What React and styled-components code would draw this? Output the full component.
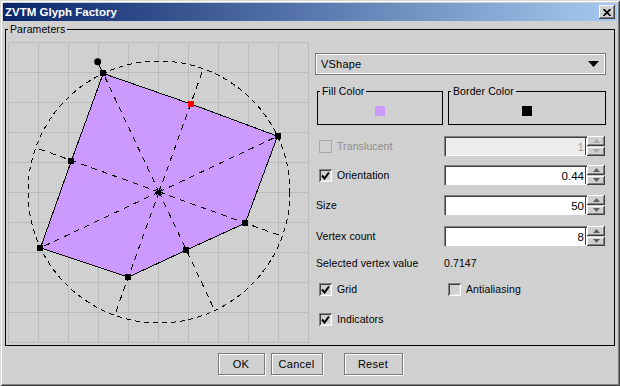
import styled, { createGlobalStyle } from 'styled-components';

const GlobalStyle = createGlobalStyle`
  html, body {
    margin: 0;
    padding: 0;
    background: #d0d0d0;
  }
  body {
    font-family: "Liberation Sans", Arial, sans-serif;
    font-size: 10.5px;
    color: #000;
  }
`;

const Window = styled.div`
  width: 620px;
  height: 386px;
  box-sizing: border-box;
  padding: 3px;
  display: flex;
  flex-direction: column;
  background: #d0d0d0;
  box-shadow: inset 1px 1px 0 #d8d8d8, inset -1px -1px 0 #404040,
    inset 2px 2px 0 #fff, inset -2px -2px 0 #808080;
`;

const TitleBar = styled.div`
  height: 18px;
  display: flex;
  align-items: center;
  justify-content: space-between;
  padding: 0 2px 0 2px;
  background: linear-gradient(to right, #0a246a, #a6caf0);
  color: #fff;
  font-weight: bold;
  font-size: 11.5px;
`;

const CloseButton = styled.div`
  width: 16px;
  height: 14px;
  display: flex;
  align-items: center;
  justify-content: center;
  background: #d0d0d0;
  box-shadow: inset -1px -1px 0 #404040, inset 1px 1px 0 #fff,
    inset -2px -2px 0 #808080;
`;

const Body = styled.div`
  flex: 1;
  display: flex;
  flex-direction: column;
  padding: 0 2px;
`;

const Group = styled.fieldset`
  margin: 2px 0 0;
  padding: 6px 8px 2px 2px;
  border: 1px solid #000;
  display: flex;
  gap: 6px;
  min-width: 0;
`;

const Legend = styled.legend`
  padding: 0 2px;
  margin: 0;
  font-size: 10.5px;
  line-height: 13px;
  letter-spacing: 0.1px;
`;

const Panel = styled.div`
  flex: 1;
  display: flex;
  flex-direction: column;
`;

const Combo = styled.div`
  margin-top: 11px;
  height: 22px;
  box-sizing: border-box;
  display: flex;
  align-items: center;
  justify-content: space-between;
  padding: 0 6px 0 5px;
  border: 1px solid #7a7a7a;
  box-shadow: inset 1px 1px 0 #fff, inset -1px -1px 0 #fff;
  font-size: 11px;
  letter-spacing: 0.2px;
`;

const ColorRow = styled.div`
  display: flex;
  gap: 5px;
  margin: 10px 0 0 2px;
`;

const ColorBox = styled.fieldset`
  width: ${(p) => p.$w}px;
  height: 40px;
  box-sizing: border-box;
  margin: 0;
  padding: 0 2px;
  border: 1px solid #000;
  display: flex;
  align-items: center;
  justify-content: center;
  min-width: 0;
`;

const Swatch = styled.div`
  width: 10px;
  height: 10px;
  margin-top: -1px;
  background: ${(p) => p.$color};
`;

const Row = styled.div`
  display: flex;
  align-items: center;
  height: 20px;
  margin-top: ${(p) => p.$mt}px;
`;

const LabelCell = styled.div`
  width: 129px;
  display: flex;
  align-items: center;
  padding-left: ${(p) => (p.$check ? 4 : 1)}px;
  box-sizing: border-box;
  letter-spacing: 0.1px;
  color: ${(p) => (p.$disabled ? '#8e8e8e' : '#000')};
`;

const Box = styled.span`
  width: 13px;
  height: 13px;
  box-sizing: border-box;
  margin-right: 5px;
  display: inline-flex;
  align-items: center;
  justify-content: center;
  flex: none;
  background: #d0d0d0;
  box-shadow: ${(p) =>
    p.$disabled
      ? 'inset 0 0 0 1px #a8a8a8'
      : 'inset 1px 1px 0 #808080, inset -1px -1px 0 #fff, inset 2px 2px 0 #404040, inset -2px -2px 0 #e4e4e4'};
`;

const Spinner = styled.div`
  display: flex;
  width: 161px;
  height: 20px;
`;

const Field = styled.div`
  flex: 1;
  box-sizing: border-box;
  display: flex;
  align-items: center;
  justify-content: flex-end;
  padding: 2px 3px 0 0;
  font-size: 11.5px;
  background: ${(p) => (p.$disabled ? '#ececec' : '#fff')};
  color: ${(p) => (p.$disabled ? '#9a9a9a' : '#000')};
  box-shadow: inset 1px 1px 0 #808080, inset 2px 2px 0 #404040,
    inset -1px -1px 0 #fff, inset -2px 0 0 #404040;
`;

const Steps = styled.div`
  width: 18px;
  display: flex;
  flex-direction: column;
  gap: 1px;
`;

const Step = styled.div`
  flex: 1;
  display: flex;
  align-items: center;
  justify-content: center;
  background: #d0d0d0;
  box-shadow: inset -1px -1px 0 #404040, inset 1px 1px 0 #fff,
    inset -2px -2px 0 #808080;
`;

const Value = styled.span`
  letter-spacing: 0.1px;
`;

const ButtonBar = styled.div`
  flex: 1;
  display: flex;
  align-items: center;
  justify-content: center;
  gap: 6px;
  padding-bottom: 1px;
`;

const Button = styled.div`
  width: ${(p) => p.$w}px;
  height: 22px;
  margin-left: ${(p) => p.$ml || 0}px;
  display: flex;
  align-items: center;
  justify-content: center;
  border: 1px solid #7a7a7a;
  box-sizing: border-box;
  box-shadow: inset 1px 1px 0 #fff, 1px 1px 0 #fff;
  font-size: 11px;
  letter-spacing: 0.3px;
`;

const Canvas = styled.svg`
  display: block;
  flex: none;
`;

const CX = 151;
const CY = 150;
const R = 131;
const ORIENT = 0.44;
const VALUES = [1, 0.7147, 1, 0.7, 0.49, 0.69, 1, 0.71];

const points = VALUES.map((v, k) => {
  const a = Math.PI / 2 + ORIENT - (k * Math.PI) / 4;
  return {
    x: CX + R * v * Math.cos(a),
    y: CY - R * v * Math.sin(a),
    ox: CX + R * Math.cos(a),
    oy: CY - R * Math.sin(a),
  };
});

const dotA = Math.PI / 2 + ORIENT;
const dot = { x: CX + 144 * Math.cos(dotA), y: CY - 144 * Math.sin(dotA) };

function Glyph() {
  const grid = [];
  for (let i = 0; i <= 10; i++) {
    const p = i * 30 + 0.5;
    grid.push(<line key={'v' + i} x1={p} y1={0} x2={p} y2={301} />);
    grid.push(<line key={'h' + i} x1={0} y1={p} x2={301} y2={p} />);
  }
  const poly = points.map((p) => `${p.x},${p.y}`).join(' ');
  return (
    <Canvas width="301" height="301" viewBox="0 0 301 301" shapeRendering="crispEdges">
      <g stroke="#bcbcbc" strokeWidth="1">{grid}</g>
      <polygon points={poly} fill="#cc99ff" />
      <g stroke="#000" strokeWidth="1" strokeDasharray="6 5">
        {points.map((p, i) => (
          <line key={i} x1={CX} y1={CY} x2={p.ox} y2={p.oy} />
        ))}
      </g>
      <circle cx={CX} cy={CY} r={R} fill="none" stroke="#000" strokeDasharray="5 4" />
      <polygon points={poly} fill="none" stroke="#000" strokeWidth="1" />
      <line x1={points[0].x} y1={points[0].y} x2={dot.x} y2={dot.y} stroke="#000" />
      <circle cx={dot.x} cy={dot.y} r="3.5" fill="#000" shapeRendering="auto" />
      <g stroke="#000" strokeWidth="1">
        <line x1={CX - 4} y1={CY} x2={CX + 4} y2={CY} />
        <line x1={CX} y1={CY - 4} x2={CX} y2={CY + 4} />
        <line x1={CX - 3} y1={CY - 3} x2={CX + 3} y2={CY + 3} />
        <line x1={CX - 3} y1={CY + 3} x2={CX + 3} y2={CY - 3} />
      </g>
      {points.map((p, i) => (
        <rect
          key={i}
          x={Math.round(p.x) - 3}
          y={Math.round(p.y) - 3}
          width="6"
          height="6"
          fill={i === 1 ? '#ff0000' : '#000'}
        />
      ))}
    </Canvas>
  );
}

const Check = () => (
  <svg width="9" height="9" viewBox="0 0 9 9">
    <path d="M1 4.5 L3.5 7.5 L8 1.5" fill="none" stroke="#000" strokeWidth="2" />
  </svg>
);

const Arrow = ({ up, color }) => (
  <svg width="7" height="4" viewBox="0 0 7 4">
    <path d={up ? 'M0 4 L3.5 0 L7 4 Z' : 'M0 0 L3.5 4 L7 0 Z'} fill={color} />
  </svg>
);

function SpinField({ value, disabled }) {
  const c = disabled ? '#a8a8a8' : '#606060';
  return (
    <Spinner>
      <Field $disabled={disabled}>{value}</Field>
      <Steps>
        <Step>
          <Arrow up color={c} />
        </Step>
        <Step>
          <Arrow color={c} />
        </Step>
      </Steps>
    </Spinner>
  );
}

function CheckLabel({ checked, disabled, children }) {
  return (
    <>
      <Box $disabled={disabled}>{checked && <Check />}</Box>
      {children}
    </>
  );
}

export default function App() {
  return (
    <>
      <GlobalStyle />
      <Window>
        <TitleBar>
          <span>ZVTM Glyph Factory</span>
          <CloseButton>
            <svg width="8" height="7" viewBox="0 0 8 7">
              <path d="M0.5 0 L7.5 7 M7.5 0 L0.5 7" stroke="#000" strokeWidth="1.7" />
            </svg>
          </CloseButton>
        </TitleBar>
        <Body>
          <Group>
            <Legend>Parameters</Legend>
            <Glyph />
            <Panel>
              <Combo>
                <span>VShape</span>
                <svg width="11" height="6" viewBox="0 0 11 6">
                  <path d="M0 0 L11 0 L5.5 6 Z" fill="#000" />
                </svg>
              </Combo>
              <ColorRow>
                <ColorBox $w={126}>
                  <Legend>Fill Color</Legend>
                  <Swatch $color="#cc99ff" />
                </ColorBox>
                <ColorBox $w={158}>
                  <Legend>Border Color</Legend>
                  <Swatch $color="#000" />
                </ColorBox>
              </ColorRow>
              <Row $mt={11}>
                <LabelCell $check $disabled>
                  <CheckLabel disabled>Translucent</CheckLabel>
                </LabelCell>
                <SpinField value="1" disabled />
              </Row>
              <Row $mt={9}>
                <LabelCell $check>
                  <CheckLabel checked>Orientation</CheckLabel>
                </LabelCell>
                <SpinField value="0.44" />
              </Row>
              <Row $mt={10}>
                <LabelCell>Size</LabelCell>
                <SpinField value="50" />
              </Row>
              <Row $mt={11}>
                <LabelCell>Vertex count</LabelCell>
                <SpinField value="8" />
              </Row>
              <Row $mt={7}>
                <LabelCell>Selected vertex value</LabelCell>
                <Value>0.7147</Value>
              </Row>
              <Row $mt={6}>
                <LabelCell $check>
                  <CheckLabel checked>Grid</CheckLabel>
                </LabelCell>
                <LabelCell $check>
                  <CheckLabel>Antialiasing</CheckLabel>
                </LabelCell>
              </Row>
              <Row $mt={10}>
                <LabelCell $check>
                  <CheckLabel checked>Indicators</CheckLabel>
                </LabelCell>
              </Row>
            </Panel>
          </Group>
          <ButtonBar>
            <Button $w={47}>OK</Button>
            <Button $w={52}>Cancel</Button>
            <Button $w={59} $ml={15}>Reset</Button>
          </ButtonBar>
        </Body>
      </Window>
    </>
  );
}
